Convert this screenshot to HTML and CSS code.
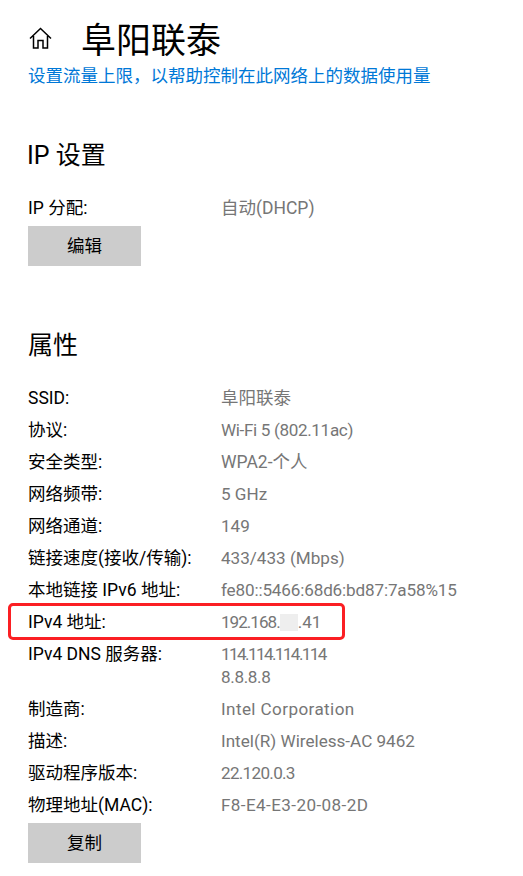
FILE: index.html
```html
<!DOCTYPE html>
<html lang="zh-CN">
<head>
    <meta charset="UTF-8">
    <title>阜阳联泰</title>
    <link rel="stylesheet" href="styles.css">
</head>
<body>
<div class="header">
    <svg class="homeIcon" width="24" height="24" viewBox="0 0 24 24">
        <path d="M2 12.500 L12.500 2.500 L23 12.500 M5.500 10 V22 H10 V14.500 H15 V22 H19.500 V10" fill="none" stroke="#000" stroke-width="1.500"/>
    </svg>
    <div class="pageTitle">阜阳联泰</div>
</div>
<div class="limitLink">设置流量上限，以帮助控制在此网络上的数据使用量</div>

<div class="sectionTitle ipTitle">IP 设置</div>
<div class="propRow firstRow">
    <div class="propName">IP 分配:</div>
    <div class="propValue">自动(DHCP)</div>
</div>
<div class="btn">编辑</div>

<div class="sectionTitle propsTitle">属性</div>
<div class="propList">
    <div class="propRow">
        <div class="propName">SSID:</div>
        <div class="propValue cjkValue">阜阳联泰</div>
    </div>
    <div class="propRow">
        <div class="propName">协议:</div>
        <div class="propValue narrow">Wi-Fi 5 (802.11ac)</div>
    </div>
    <div class="propRow">
        <div class="propName">安全类型:</div>
        <div class="propValue cjkValue">WPA2-个人</div>
    </div>
    <div class="propRow">
        <div class="propName">网络频带:</div>
        <div class="propValue">5 GHz</div>
    </div>
    <div class="propRow">
        <div class="propName">网络通道:</div>
        <div class="propValue">149</div>
    </div>
    <div class="propRow">
        <div class="propName">链接速度(接收/传输):</div>
        <div class="propValue">433/433 (Mbps)</div>
    </div>
    <div class="propRow">
        <div class="propName">本地链接 IPv6 地址:</div>
        <div class="propValue slim">fe80::5466:68d6:bd87:7a58%15</div>
    </div>
    <div class="propRow highlighted">
        <div class="propName">IPv4 地址:</div>
        <div class="propValue"><span class="ipStart">192.168.</span><span class="blurred"></span>.41</div>
    </div>
    <div class="propRow">
        <div class="propName">IPv4 DNS 服务器:</div>
        <div class="propValue">
            <div class="narrowest">114.114.114.114</div>
            <div class="secondLine narrow">8.8.8.8</div>
        </div>
    </div>
    <div class="propRow">
        <div class="propName">制造商:</div>
        <div class="propValue wide">Intel Corporation</div>
    </div>
    <div class="propRow">
        <div class="propName">描述:</div>
        <div class="propValue">Intel(R) Wireless-AC 9462</div>
    </div>
    <div class="propRow">
        <div class="propName">驱动程序版本:</div>
        <div class="propValue narrower">22.120.0.3</div>
    </div>
    <div class="propRow">
        <div class="propName">物理地址(MAC):</div>
        <div class="propValue wide">F8-E4-E3-20-08-2D</div>
    </div>
</div>
<div class="btn">复制</div>
</body>
</html>
```

FILE: styles.css
```css
body {
    margin: 0;
    padding: 0 0 0 28px;
    height: 876px;
    overflow: hidden;
    background: #fff;
    color: #000;
    font-family: Roboto, "Noto Sans CJK SC", sans-serif;
    font-size: 17.500px;
}

.header {
    display: flex;
    align-items: center;
    height: 48px;
    padding-top: 14px;
}

.homeIcon {
    margin-right: 29px;
}

.pageTitle {
    font-family: "Noto Sans CJK SC", sans-serif;
    font-size: 35px;
    line-height: 48px;
}

.limitLink {
    margin-top: 1px;
    color: #0078d7;
    font-family: "Noto Sans CJK SC", sans-serif;
    font-size: 17.500px;
    line-height: 24px;
}

.sectionTitle {
    font-size: 25px;
    line-height: 34px;
}

.ipTitle {
    margin-top: 52px;
    margin-left: -1px;
}

.propsTitle {
    margin-top: 63px;
    margin-bottom: 19px;
}

.firstRow {
    margin-top: 19px;
    margin-bottom: 2px;
}

.propRow {
    display: flex;
    line-height: 32px;
}

.propName {
    width: 193px;
    flex: none;
}

.propValue {
    color: #767676;
    font-size: 17.100px;
}

.firstRow .propValue,
.cjkValue {
    font-size: 17.500px;
}

.slim {
    letter-spacing: -0.150px;
}

.narrow {
    letter-spacing: -0.350px;
}

.narrower {
    letter-spacing: -0.700px;
}

.narrowest {
    letter-spacing: -1.600px;
}

.wide {
    letter-spacing: 0.400px;
}

.ipStart {
    letter-spacing: -1px;
}

.secondLine {
    margin-top: -9px;
}

.highlighted {
    position: relative;
}

.highlighted::before {
    content: "";
    position: absolute;
    left: -20px;
    top: -3px;
    width: 337px;
    height: 37px;
    box-sizing: border-box;
    border: 3px solid #fb1f23;
    border-radius: 5px;
}

.blurred {
    display: inline-block;
    width: 18px;
    height: 17px;
    vertical-align: -3px;
    background: #eeeeee;
}

.btn {
    width: 113px;
    height: 40px;
    line-height: 41px;
    text-align: center;
    background: #cccccc;
}

.propList + .btn {
    margin-top: 2px;
}
```
